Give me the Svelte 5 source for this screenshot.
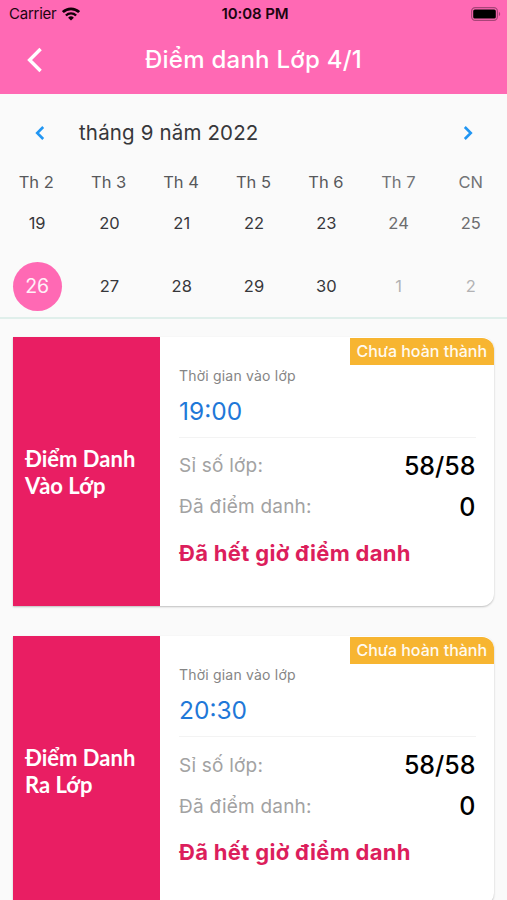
<script>
  const weekdays = ['Th 2', 'Th 3', 'Th 4', 'Th 5', 'Th 6', 'Th 7', 'CN'];

  const days = [
    { day: 19 },
    { day: 20 },
    { day: 21 },
    { day: 22 },
    { day: 23 },
    { day: 24, weekend: true },
    { day: 25, weekend: true },
    { day: 26 },
    { day: 27 },
    { day: 28 },
    { day: 29 },
    { day: 30 },
    { day: 1, outside: true },
    { day: 2, outside: true }
  ];

  let selected = $state(26);

  const sessions = [
    { title: ['Điểm Danh', 'Vào Lớp'], time: '19:00', total: '58/58', checked: 0 },
    { title: ['Điểm Danh', 'Ra Lớp'], time: '20:30', total: '58/58', checked: 0 }
  ];
</script>

<div class="screen">
  <header>
    <div class="status-bar">
      <div class="carrier">
        <span>Carrier</span>
        <svg width="18" height="14" viewBox="0 0 18 14" fill="none" stroke="#120008">
          <path d="M0.9 5.1a11.6 11.6 0 0 1 16.2 0" stroke-width="2.7" />
          <path d="M3.9 8.5a7.3 7.3 0 0 1 10.2 0" stroke-width="2.4" />
          <path d="M9 13.6 6.1 10.7a4.1 4.1 0 0 1 5.8 0z" fill="#120008" stroke="none" />
        </svg>
      </div>
      <span class="clock">10:08 PM</span>
      <div class="battery">
        <svg width="30" height="14" viewBox="0 0 30 14">
          <rect x="0.6" y="0.6" width="25.8" height="12.8" rx="3.6" fill="none" stroke="#a84478" stroke-width="1.2" />
          <rect x="2.2" y="2.4" width="22.6" height="9.2" rx="1.6" fill="#000" />
          <path d="M27.9 4.8c1.7.8 1.7 3.6 0 4.4z" fill="#a84478" />
        </svg>
      </div>
    </div>
    <div class="nav-bar">
      <button class="back" aria-label="Quay lại">
        <svg width="16" height="26" viewBox="0 0 16 26" fill="none" stroke="#fff" stroke-width="3.4">
          <path d="M13.6 2 2.6 13l11 11" />
        </svg>
      </button>
      <h1>Điểm danh Lớp 4/1</h1>
    </div>
  </header>

  <section class="calendar">
    <div class="month">
      <button aria-label="Tháng trước">
        <svg width="10" height="16" viewBox="0 0 10 16" fill="none" stroke="#2196f3" stroke-width="2.6">
          <path d="M8.2 2 2.2 8l6 6" />
        </svg>
      </button>
      <h2>tháng 9 năm 2022</h2>
      <button aria-label="Tháng sau">
        <svg width="10" height="16" viewBox="0 0 10 16" fill="none" stroke="#2196f3" stroke-width="2.6">
          <path d="M1.8 2l6 6-6 6" />
        </svg>
      </button>
    </div>
    <div class="weekdays">
      {#each weekdays as name, i}
        <span class:weekend={i > 4}>{name}</span>
      {/each}
    </div>
    <div class="days">
      {#each days as { day, weekend, outside }}
        <button
          class:weekend
          class:outside
          class:selected={day === selected}
          onclick={() => (selected = day)}
        >
          {day}
        </button>
      {/each}
    </div>
  </section>

  <main>
    {#each sessions as session}
      <article>
        <div class="title">
          {#each session.title as line}
            <div>{line}</div>
          {/each}
        </div>
        <div class="info">
          <span class="badge">Chưa hoàn thành</span>
          <div class="label">Thời gian vào lớp</div>
          <div class="time">{session.time}</div>
          <div class="row">
            <span class="key">Sỉ số lớp:</span>
            <span class="value">{session.total}</span>
          </div>
          <div class="row">
            <span class="key">Đã điểm danh:</span>
            <span class="value">{session.checked}</span>
          </div>
          <div class="expired">Đã hết giờ điểm danh</div>
        </div>
      </article>
    {/each}
  </main>
</div>

<style>
  :global(body) {
    background: #fafafa;
    overflow: hidden;
  }

  .screen {
    height: 900px;
    overflow: hidden;
    background: #fafafa;
    font-family: Inter, 'Liberation Sans', sans-serif;
  }

  h1,
  h2 {
    margin: 0;
  }

  button {
    padding: 0;
    border: 0;
    background: none;
    font: inherit;
    color: inherit;
  }

  svg {
    display: block;
  }

  /* header */
  header {
    height: 94px;
    background: #ff69b4;
  }

  .status-bar {
    display: grid;
    grid-template-columns: 1fr auto 1fr;
    align-items: center;
    height: 27px;
    padding: 0 6px 0 9px;
    color: #1c0510;
    font-size: 15px;
  }

  .carrier {
    display: flex;
    align-items: center;
    gap: 6px;
    letter-spacing: -0.25px;
  }

  .clock {
    font-weight: 600;
    letter-spacing: -0.1px;
  }

  .battery {
    display: flex;
    justify-content: flex-end;
  }

  .nav-bar {
    display: grid;
    grid-template-columns: 43px 1fr 43px;
    align-items: center;
    height: 65px;
    color: #fff;
  }

  .back {
    display: flex;
    justify-content: flex-end;
  }

  h1 {
    font-size: 24px;
    font-weight: 500;
    letter-spacing: 0.25px;
    text-align: center;
  }

  /* calendar */
  .calendar {
    height: 223px;
    border-bottom: 2px solid #e0efeb;
    color: #37373a;
  }

  .month {
    display: flex;
    align-items: center;
    height: 77px;
    padding: 0 34px 0 35px;
  }

  h2 {
    flex: 1;
    margin-left: 34px;
    font-size: 20.5px;
    font-weight: 400;
    letter-spacing: 0.15px;
  }

  .weekdays,
  .days {
    display: grid;
    grid-template-columns: repeat(7, 1fr);
    justify-items: center;
  }

  .weekdays {
    height: 20px;
    line-height: 22px;
    color: #57585a;
    font-size: 16.5px;
  }

  .weekdays .weekend {
    color: #727376;
  }

  .days {
    grid-auto-rows: 63.5px;
    align-items: center;
    padding-left: 1px;
    font-size: 16.5px;
  }

  .days button {
    width: 49px;
    height: 49px;
    border-radius: 50%;
  }

  .days .weekend {
    color: #6c6c6e;
  }

  .days .outside {
    color: #b2b2b4;
  }

  .days .selected {
    background: #ff69b4;
    color: #fff0f8;
    font-size: 19.5px;
  }

  /* attendance cards */
  main {
    display: flex;
    flex-direction: column;
    gap: 30.4px;
    padding: 18px 13px 0 13px;
  }

  article {
    display: flex;
    height: 269px;
    border-radius: 0 12px 12px 0;
    background: #fff;
    box-shadow: 0 1px 2px rgba(0, 0, 0, 0.24);
  }

  .title {
    display: flex;
    flex-direction: column;
    justify-content: center;
    width: 147px;
    padding-left: 12px;
    box-sizing: border-box;
    background: #e91e63;
    color: #fff;
    font: 700 22px/27px Lato, Inter, sans-serif;
  }

  .info {
    position: relative;
    flex: 1;
    padding: 29px 18.5px 0 19px;
  }

  .badge {
    position: absolute;
    top: 1px;
    right: 0.5px;
    width: 143.5px;
    height: 27px;
    border-radius: 0 12px 0 0;
    background: #f7b531;
    color: #fffaf0;
    font-size: 16px;
    font-weight: 500;
    line-height: 26px;
    text-align: center;
  }

  .label {
    color: #858585;
    font-size: 14px;
    letter-spacing: 0.2px;
    line-height: 20px;
  }

  .time {
    height: 52px;
    margin-bottom: 7px;
    border-bottom: 1px solid #f3f3f3;
    box-sizing: border-box;
    color: #1f78d8;
    font-size: 24.5px;
    line-height: 51px;
  }

  .row {
    display: flex;
    align-items: center;
    justify-content: space-between;
    height: 41.3px;
  }

  .key {
    color: #a2a2a2;
    font-size: 19px;
    letter-spacing: 0.22px;
  }

  .value {
    color: #000;
    font-size: 25px;
    font-weight: 500;
  }

  .expired {
    margin-top: 9px;
    color: #dc1e5c;
    font-size: 22px;
    font-weight: 700;
    letter-spacing: 0.32px;
    line-height: 32px;
  }
</style>
